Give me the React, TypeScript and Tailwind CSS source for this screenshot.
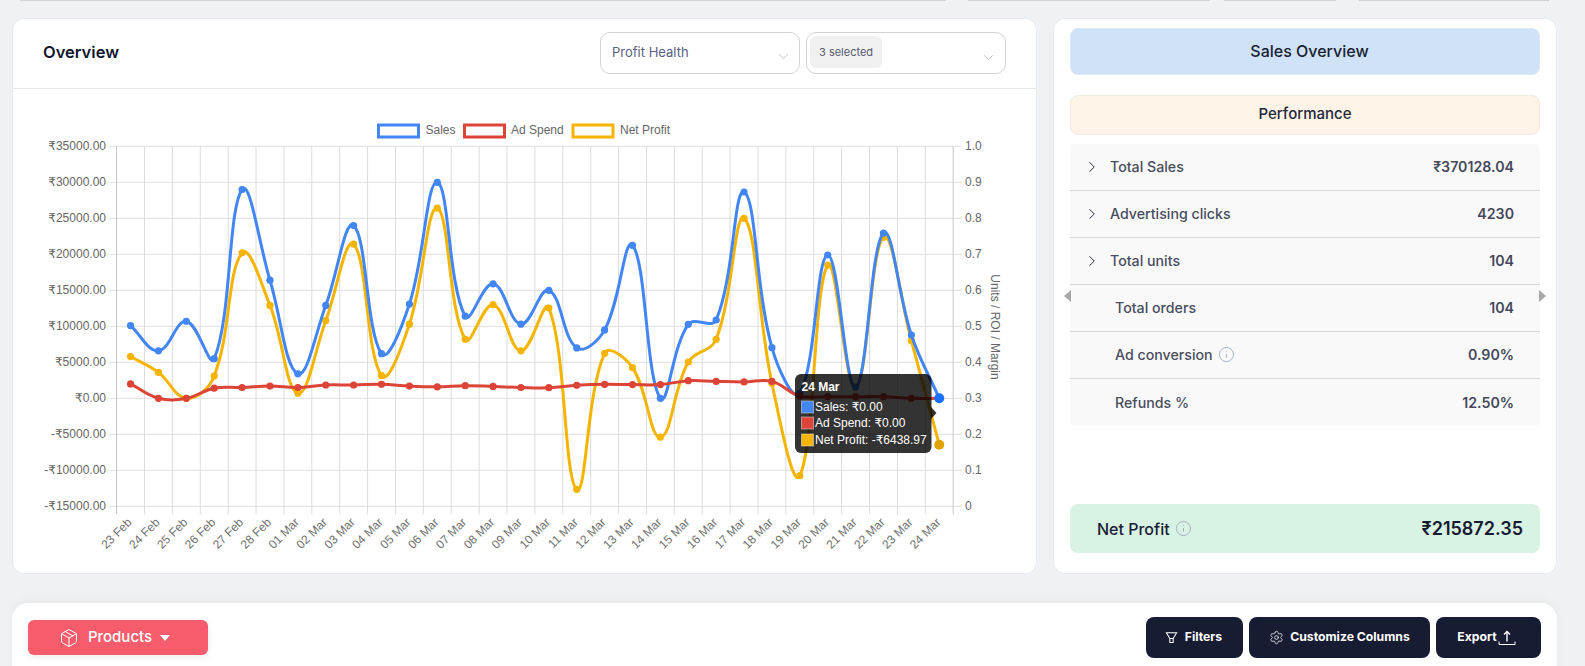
import { ChevronDown, ChevronRight, Info, Package, Settings } from "lucide-react";

const days = [
  "23 Feb", "24 Feb", "25 Feb", "26 Feb", "27 Feb", "28 Feb", "01 Mar", "02 Mar", "03 Mar", "04 Mar",
  "05 Mar", "06 Mar", "07 Mar", "08 Mar", "09 Mar", "10 Mar", "11 Mar", "12 Mar", "13 Mar", "14 Mar",
  "15 Mar", "16 Mar", "17 Mar", "18 Mar", "19 Mar", "20 Mar", "21 Mar", "22 Mar", "23 Mar", "24 Mar",
];

const sales = [
  10100, 6600, 10700, 5500, 29000, 16400, 3400, 12900, 24000, 6200, 13100, 30000, 11400, 15900, 10300,
  15000, 7000, 9500, 21250, 0, 10280, 10875, 28650, 7030, 700, 19900, 1570, 22950, 8790, 0,
];
const adSpend = [
  2000, 0, 0, 1400, 1500, 1700, 1500, 1850, 1850, 1950, 1700, 1600, 1750, 1650, 1500,
  1470, 1800, 1940, 1900, 1900, 2450, 2350, 2280, 2350, 320, 220, 220, 220, 0, 0,
];
const netProfit = [
  5800, 3600, 0, 3100, 20200, 12900, 700, 10780, 21400, 3140, 10300, 26400, 8200, 13000, 6600,
  12540, -12640, 6250, 4250, -5400, 5040, 8190, 25000, 2080, -10750, 18500, 1500, 22360, 8000, -6438.97,
];

const LEFT = 116.6;
const RIGHT = 953.2;
const BOTTOM = 506.3;
const ZERO = 398.3;
const STEP = (RIGHT - LEFT) / 30;

const xAt = (i: number) => LEFT + STEP * (i + 0.5);
const yAt = (v: number) => ZERO - (v * 36) / 5000;

// same curve chart.js draws with tension 0.4
function splinePath(values: number[]) {
  const pts = values.map((v, i) => ({ x: xAt(i), y: yAt(v) }));
  const cps = pts.map((p, i) => {
    const prev = pts[i - 1] ?? p;
    const next = pts[i + 1] ?? p;
    const d01 = Math.hypot(p.x - prev.x, p.y - prev.y);
    const d12 = Math.hypot(next.x - p.x, next.y - p.y);
    const total = d01 + d12 || 1;
    const fa = (0.4 * d01) / total;
    const fb = (0.4 * d12) / total;
    return {
      px: p.x - fa * (next.x - prev.x),
      py: p.y - fa * (next.y - prev.y),
      nx: p.x + fb * (next.x - prev.x),
      ny: p.y + fb * (next.y - prev.y),
    };
  });
  let d = `M${pts[0].x} ${pts[0].y}`;
  for (let i = 1; i < pts.length; i++) {
    d += `C${cps[i - 1].nx} ${cps[i - 1].ny} ${cps[i].px} ${cps[i].py} ${pts[i].x} ${pts[i].y}`;
  }
  return d;
}

const leftTicks = [35000, 30000, 25000, 20000, 15000, 10000, 5000, 0, -5000, -10000, -15000];
const rightTicks = ["1.0", "0.9", "0.8", "0.7", "0.6", "0.5", "0.4", "0.3", "0.2", "0.1", "0"];

const series = [
  { data: netProfit, color: "#f4b400" },
  { data: sales, color: "#4285f4" },
  { data: adSpend, color: "#db4437" },
];

const legend = [
  { name: "Sales", color: "#4285f4", x: 378.5, tx: 425.5 },
  { name: "Ad Spend", color: "#db4437", x: 464.5, tx: 511 },
  { name: "Net Profit", color: "#f4b400", x: 573, tx: 620 },
];

const tooltipRows = [
  { text: "Sales: ₹0.00", color: "#4285f4", y: 401, ty: 410 },
  { text: "Ad Spend: ₹0.00", color: "#db4437", y: 417, ty: 426 },
  { text: "Net Profit: -₹6438.97", color: "#f4b400", y: 434, ty: 443 },
];

function OverviewChart() {
  return (
    <svg viewBox="13 89 1023 484" className="block h-[484px] w-[1023px] font-['Liberation_Sans','DejaVu_Sans',sans-serif]">
      {legend.map((l) => (
        <g key={l.name}>
          <rect x={l.x} y={125} width={40} height={12} fill="#ffffff" stroke={l.color} strokeWidth={3} />
          <text x={l.tx} y={134} fontSize={12} fill="#666666">{l.name}</text>
        </g>
      ))}

      {leftTicks.map((t, i) => {
        const y = 146.3 + i * 36;
        return (
          <g key={t}>
            <line x1={LEFT - 8} x2={RIGHT + 8} y1={y} y2={y} stroke="#dedede" />
            <text x={106} y={y + 4} fontSize={12} fill="#666666" textAnchor="end">
              {t < 0 ? `-₹${-t}.00` : `₹${t}.00`}
            </text>
            <text x={965} y={y + 4} fontSize={12} fill="#666666">{rightTicks[i]}</text>
          </g>
        );
      })}

      {Array.from({ length: 31 }, (_, i) => {
        const x = LEFT + STEP * i;
        const isAxis = i === 0 || i === 30;
        return <line key={i} x1={x} x2={x} y1={146.3} y2={BOTTOM + 8} stroke={isAxis ? "#c4c4c4" : "#dcdcdc"} />;
      })}

      {days.map((d, i) => (
        <text
          key={d}
          fontSize={12}
          fill="#707070"
          textAnchor="end"
          transform={`translate(${xAt(i) + 2} 523) rotate(-45)`}
        >
          {d}
        </text>
      ))}

      <text fontSize={12} fill="#666666" textAnchor="middle" transform="translate(991 327) rotate(90)">
        Units / ROI / Margin
      </text>

      {series.map((s) => (
        <g key={s.color}>
          <path d={splinePath(s.data)} fill="none" stroke={s.color} strokeWidth={3} />
          {s.data.map((v, i) => (
            <circle key={i} cx={xAt(i)} cy={yAt(v)} r={3.6} fill={s.color} />
          ))}
        </g>
      ))}

      <circle cx={xAt(29)} cy={yAt(-6438.97)} r={5} fill="#e0a400" />
      <circle cx={xAt(29)} cy={yAt(0)} r={5} fill="#1a6fff" />

      <path d="M931 407l5.5 6-5.5 6z" fill="#000000" fillOpacity={0.8} />
      <rect x={795} y={374} width={136.5} height={79} rx={6} fill="#000000" fillOpacity={0.8} />
      <text x={801.5} y={391} fontSize={12} fontWeight={700} fill="#ffffff">24 Mar</text>
      {tooltipRows.map((r) => (
        <g key={r.text}>
          <rect x={801.5} y={r.y} width={12} height={12} fill={r.color} stroke="#ffffff" strokeOpacity={0.45} />
          <text x={815} y={r.ty + 0.5} fontSize={12} fill="#ffffff">{r.text}</text>
        </g>
      ))}
    </svg>
  );
}

function StatRow({ label, value, expand, info, last }: { label: string; value: string; expand?: boolean; info?: boolean; last?: boolean }) {
  return (
    <div className={`flex h-[47px] items-center justify-between pr-[26px] ${last ? "" : "border-b border-[#d6d7d9]"} ${expand ? "pl-[13px]" : "pl-[45px]"}`}>
      <div className="flex items-center text-[14.2px] font-medium text-[#4a4d5e]">
        {expand && <ChevronRight className="mr-[9px] h-[18px] w-[18px] text-[#25283a]" strokeWidth={1.3} />}
        {label}
        {info && <Info className="ml-[5px] h-[17px] w-[17px] text-[#a9afc4]" strokeWidth={1.4} />}
      </div>
      <div className="text-[14.2px] font-semibold text-[#45485a]">{value}</div>
    </div>
  );
}

function FilterIcon() {
  return (
    <svg viewBox="0 0 14 14" className="h-[13px] w-[13px]" fill="none" stroke="#ffffff" strokeWidth={1.1}>
      <path d="M1.5 2h11L8.8 8H5.2z" />
      <path d="M5.2 8v4.5h3.6V8" />
    </svg>
  );
}

function ExportIcon() {
  return (
    <svg viewBox="0 0 18 16" className="h-[16px] w-[18px]" fill="none" stroke="#ffffff" strokeWidth={1.4}>
      <path d="M9 11.5V1.5M6 4.5l3-3 3 3" />
      <path d="M1 11.5v3h16v-3" strokeWidth={1} />
    </svg>
  );
}

export default function App() {
  return (
    <div className="h-[666px] w-[1585px] overflow-hidden bg-[#f0f1f3] font-['Inter',sans-serif]">
      <div className="flex h-[18px] items-start pl-[20px]">
        <div className="h-[1px] w-[926px] bg-[#cfd2d6]" />
        <div className="ml-[22px] h-[1px] w-[242px] bg-[#cfd2d6]" />
        <div className="ml-[14px] h-[1px] w-[112px] bg-[#cfd2d6]" />
        <div className="ml-[23px] h-[1px] w-[190px] bg-[#cfd2d6]" />
      </div>

      <div className="flex items-start pl-[12px]">
        <div className="h-[556px] w-[1025px] overflow-hidden rounded-xl border border-[#e9eaed] bg-white">
          <div className="flex h-[70px] items-center justify-between border-b border-[#e6e7ea] pb-[2px] pl-[30px] pr-[30px]">
            <div className="text-[16.5px] font-semibold text-[#12182f]">Overview</div>
            <div className="flex gap-[6px]">
              <div className="flex h-[42px] w-[200px] items-center justify-between rounded-[10px] border border-[#d2d3d6] pl-[11px] pr-[7px]">
                <span className="text-[13px] text-[#5a6080]">Profit Health</span>
                <ChevronDown className="mt-[8px] h-[17px] w-[17px] text-[#a6a8ad]" strokeWidth={1} />
              </div>
              <div className="flex h-[42px] w-[200px] items-center justify-between rounded-[10px] border border-[#d2d3d6] pl-[3px] pr-[8px]">
                <span className="mb-[2px] rounded-[6px] bg-[#f0f0f0] px-[9px] pb-[8px] pt-[9px] text-[11px] leading-[15px] text-[#565b70]">3 selected</span>
                <ChevronDown className="mt-[10px] h-[17px] w-[17px] text-[#a6a8ad]" strokeWidth={1} />
              </div>
            </div>
          </div>
          <OverviewChart />
        </div>

        <div className="relative ml-[16px] flex h-[556px] w-[504px] flex-col rounded-xl border border-[#e9eaed] bg-white px-[16px] pb-[20px] pt-[9px]">
          <div className="flex h-[47px] items-center justify-center rounded-lg border border-[#dce8f6] bg-[#cfe2f7] pb-[2px] pl-[9px] text-[16px] font-medium text-[#191e33]">
            Sales Overview
          </div>
          <div className="mt-[20px] flex h-[40px] items-center justify-center rounded-lg border border-[#eeeae4] bg-[#fef3e6] pb-[2px] text-[15px] font-medium text-[#24283b]">
            Performance
          </div>
          <div className="mt-[9px] rounded-sm bg-[#f9f9fa]">
            <StatRow label="Total Sales" value="₹370128.04" expand />
            <StatRow label="Advertising clicks" value="4230" expand />
            <StatRow label="Total units" value="104" expand />
            <StatRow label="Total orders" value="104" />
            <StatRow label="Ad conversion" value="0.90%" info />
            <StatRow label="Refunds %" value="12.50%" last />
          </div>
          <div className="mt-auto flex h-[49px] items-center justify-between rounded-lg bg-[#d8f2e3] pl-[27px] pr-[17px]">
            <div className="flex items-center text-[16px] font-medium text-[#1a2035]">
              Net Profit
              <Info className="ml-[5px] h-[17px] w-[17px] text-[#a9afc4]" strokeWidth={1.4} />
            </div>
            <div className="text-[18px] font-semibold text-[#141a30]">₹215872.35</div>
          </div>
          <div className="absolute left-[10px] top-[271px] h-0 w-0 border-y-[6px] border-r-[7px] border-y-transparent border-r-[#a8a8a8]" />
          <div className="absolute right-[10px] top-[271px] h-0 w-0 border-y-[6px] border-l-[7px] border-y-transparent border-l-[#a8a8a8]" />
        </div>
      </div>

      <div className="ml-[12px] mt-[29px] flex h-[80px] w-[1545px] items-start justify-between rounded-t-2xl bg-white pl-[16px] pr-[16px] shadow-[0_-4px_8px_rgba(0,0,0,0.03)]">
        <div className="mt-[17px] flex h-[35px] w-[180px] items-center justify-center rounded-md bg-[#f65c6b] pr-[7px] text-[15px] font-medium text-white shadow-[0_2px_8px_rgba(0,0,0,0.08)]">
          <Package className="mr-[9px] h-[20px] w-[20px]" strokeWidth={1.2} />
          Products
          <span className="ml-[8px] h-0 w-0 border-x-[5px] border-t-[6px] border-x-transparent border-t-white" />
        </div>
        <div className="mt-[14px] flex gap-[6px] text-[12.2px] font-bold text-white">
          <div className="flex h-[41px] w-[97px] items-center justify-center gap-[7px] rounded-lg bg-[#171c33] pr-[2px]">
            <FilterIcon />
            Filters
          </div>
          <div className="flex h-[41px] w-[181px] items-center justify-center gap-[6px] rounded-lg bg-[#171c33]">
            <Settings className="h-[15px] w-[15px]" strokeWidth={1.2} />
            Customize Columns
          </div>
          <div className="flex h-[41px] w-[105px] items-center justify-center gap-[1px] rounded-lg bg-[#171c33] pr-[4px]">
            Export
            <ExportIcon />
          </div>
        </div>
      </div>
    </div>
  );
}
